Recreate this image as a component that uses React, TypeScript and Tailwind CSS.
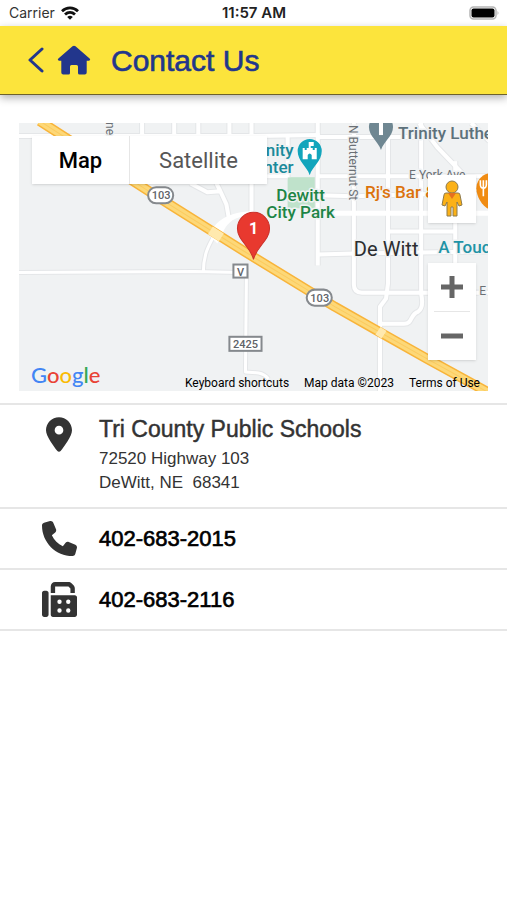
import { FaFax, FaLocationDot, FaPhone } from "react-icons/fa6";

const streets = [
  "M0 13H92V0M124 0V13M92 13H235M156 0V13M180 0V13M211 0V13M235 13L301 12",
  "M233 0V95M299 0V142M335 0V161Q335 169 343 169H408",
  "M369 0V160L367 175L361 183V267",
  "M402 0V170Q405 184 399 188C391 190 394 200 385 200H362",
  "M436 38V140",
  "M299 14H402M299 53H470M299 72L335 73L436 70M369 108H436M299 131L335 130L470 128",
  "M408 169H470M400 0L418 24L462 70M452 0L470 18M269 14V54M233 53H269",
  "M172 60L189 69L202 68L208 81L211 98M202 68L198 60",
];

const ruralRoads = [
  "M0 149L176 148L222 149",
  "M228 148L227 248L240 249Q246 250 250 255",
  "M196 112C190 122 185 132 185 149",
];

const highway =
  "M22 -2L151 81L226 128L316 183L362 209L408 235L470 269";

function Roads({ paths, width, casing }: { paths: string[]; width: number; casing: number }) {
  return (
    <g fill="none" strokeLinejoin="round">
      {paths.map((d) => (
        <path key={`${d}-casing`} d={d} stroke="#e4e6e8" strokeWidth={casing} />
      ))}
      {paths.map((d) => (
        <path key={d} d={d} stroke="#ffffff" strokeWidth={width} />
      ))}
    </g>
  );
}

function MapCanvas() {
  return (
    <svg
      viewBox="0 0 470 267"
      preserveAspectRatio="xMidYMid slice"
      className="h-full w-full font-[Roboto,sans-serif]"
      aria-hidden="true"
    >
      <rect width="470" height="267" fill="#f0f2f3" />
      <rect x="269" y="54" width="29" height="31" fill="#bfe2cb" />
      <Roads paths={ruralRoads} width={3} casing={5} />
      <Roads paths={streets} width={4} casing={6} />
      <path d="M297 90H470" stroke="#ffffff" strokeWidth="5" />
      <path
        d="M191 112C196 98 210 88 236 88V92C218 92 210 98 205 108L199 120Z"
        fill="#ffffff"
      />

      <g fill="none" strokeLinejoin="round">
        <path d={highway} stroke="#f8b43a" strokeWidth="10" />
        <path d={highway} stroke="#fdd878" strokeWidth="7" />
        <path d={highway} stroke="#fbcb60" strokeWidth="1" />
        <path d="M192 107L203 114M359 207L365 211" stroke="#ffe9ae" strokeWidth="9" />
      </g>

      <g fill="#ffffff" stroke="#85898d" strokeWidth="2">
        <rect x="130" y="64" width="25" height="16" rx="8" />
        <rect x="288" y="166" width="25" height="16" rx="8" />
        <rect x="215" y="141" width="14" height="13" />
        <rect x="211" y="213" width="32" height="14" />
      </g>
      <g fill="#5f6368" fontSize="11" fontWeight="500" textAnchor="middle">
        <text x="143" y="76">103</text>
        <text x="301" y="178">103</text>
        <text x="222" y="152">V</text>
        <text x="227" y="224">2425</text>
      </g>

      <g stroke="#f0f2f3" strokeWidth="3" paintOrder="stroke" strokeLinejoin="round">
        <g fill="#6b7075" fontSize="12">
          <text transform="translate(88 -1) rotate(90)">ne</text>
          <text transform="translate(330 2) rotate(90)">N Butternut St</text>
          <text x="390" y="56">E York Ave</text>
          <text x="460" y="171">E</text>
        </g>
        <g fontSize="17" fontWeight="500">
          <text x="275" y="33" fill="#1a8a9b" textAnchor="end">nity</text>
          <text x="275" y="50" fill="#1a8a9b" textAnchor="end">nter</text>
          <text x="282" y="78" fill="#1e8546" textAnchor="middle">Dewitt</text>
          <text x="282" y="95" fill="#1e8546" textAnchor="middle">City Park</text>
          <text x="379" y="16" fill="#5d717b">Trinity Luthe</text>
          <text x="346" y="75" fill="#dc720b">Rj's Bar &amp;</text>
          <text x="419" y="130" fill="#1f93a6">A Touc</text>
        </g>
        <text x="335" y="133" fill="#2b2d30" fontSize="20">De Witt</text>
      </g>

      <g>
        <path d="M291 52C288 43 279 38 279 28A12 12 0 0 1 303 28C303 38 294 43 291 52Z" fill="#12a5bc" />
        <path
          d="M284 36V25H286V27H288V25H290V19H295V23H292V25H294V27H296V25H298V36H293V32Q291 29 289 32V36Z"
          fill="#ffffff"
        />
        <path d="M362 27C359 18 350 13 350 4A12 12 0 0 1 374 4C374 13 365 18 362 27Z" fill="#6f8792" />
        <path d="M360 0H364V12H360Z" fill="#ffffff" />
        <path d="M470 86C464 84 457 74 457 65C457 58 462 51 470 50Z" fill="#f08c13" />
        <path d="M461 57V61Q461 65 464 65Q467 65 467 61V57M464 57V73" fill="none" stroke="#ffffff" strokeWidth="1.6" />
        <path d="M470 57V73" stroke="#ffffff" strokeWidth="2" />
      </g>

      <path
        d="M235 136C232 123 219 117 219 105A16 16 0 0 1 251 105C251 117 238 123 235 136Z"
        fill="#e8392f"
        stroke="#c9302a"
      />
      <text x="235" y="111" fill="#ffffff" fontSize="16" fontWeight="700" textAnchor="middle">
        1
      </text>
    </svg>
  );
}

function Pegman() {
  return (
    <svg viewBox="0 0 24 40" className="h-10 w-6" aria-hidden="true">
      <g fill="#fbb117" stroke="#8d7a4c" strokeWidth="1">
        <path d="M6 14H18Q20 14 20 16L22 26L19 27L17 23V37H13V28H11V37H7V23L5 27L2 26L4 16Q4 14 6 14Z" />
        <circle cx="12" cy="8" r="6" />
      </g>
      <path d="M8 14H16L12 20Z" fill="#e5701f" />
    </svg>
  );
}

function HomeIcon() {
  return (
    <svg viewBox="0 0 34 30" className="h-[30px] w-[34px]" aria-hidden="true">
      <path
        d="M15.500 1.300Q17 0 18.500 1.300L32.600 13.600Q34 15.200 32 15.800H29.700V27.500Q29.700 29.500 27.700 29.500H22.500Q21 29.500 21 28V21.500Q21 20 19.500 20H14.500Q13 20 13 21.500V28Q13 29.500 11.500 29.500H6.300Q4.300 29.500 4.300 27.500V15.800H2Q0 15.200 1.400 13.600Z"
        fill="currentColor"
      />
    </svg>
  );
}

function StatusBar() {
  return (
    <div className="grid h-[26px] grid-cols-3 items-center pr-2 pl-[9px] font-[Inter,sans-serif] text-[#333]">
      <div className="flex items-center gap-1.5">
        <span className="text-sm">Carrier</span>
        <svg viewBox="0 0 18 14" className="h-3.5 w-[18px]" aria-hidden="true">
          <g fill="none" stroke="#111" strokeWidth="2.8">
            <path d="M1 5.200C5.600 .8 12.400 .8 17 5.200" />
            <path d="M4 8.600C7 5.800 11 5.800 14 8.600" />
          </g>
          <path d="M6.200 10.900Q9 8.800 11.800 10.900L9 13.800Z" fill="#111" />
        </svg>
      </div>
      <span className="text-center text-[15px] font-semibold text-[#222]">11:57 AM</span>
      <svg viewBox="0 0 30 14" className="h-3.5 w-[30px] justify-self-end" aria-hidden="true">
        <rect x="1" y="1" width="26" height="12" rx="3.500" fill="#fff" stroke="#b5b5b5" strokeWidth="1.500" />
        <rect x="2.500" y="2.500" width="23" height="9" rx="2" fill="#000" />
        <path d="M28.500 5Q30.500 7 28.500 9Z" fill="#b5b5b5" />
      </svg>
    </div>
  );
}

function ContactMap() {
  return (
    <section className="relative mx-[19px] mt-7 h-[268px] overflow-hidden font-[Roboto,sans-serif]">
      <MapCanvas />
      <div className="absolute top-[13px] left-[13px] flex h-12 divide-x divide-[#e6e6e6] bg-white text-[22px] shadow">
        <button type="button" className="w-[98px] font-medium text-black">
          Map
        </button>
        <button type="button" className="w-[137px] text-[#565656]">
          Satellite
        </button>
      </div>
      <button
        type="button"
        aria-label="Street View"
        className="absolute top-[52px] right-3 flex size-12 items-center justify-center bg-white shadow"
      >
        <Pegman />
      </button>
      <div className="absolute top-[140px] right-3 flex w-12 flex-col items-center bg-white shadow">
        <button type="button" aria-label="Zoom in" className="flex size-12 items-center justify-center">
          <svg viewBox="0 0 22 22" className="size-[22px]" aria-hidden="true">
            <path d="M11 0V22M0 11H22" stroke="#666" strokeWidth="5" />
          </svg>
        </button>
        <div className="h-px w-9 bg-[#e6e6e6]" />
        <button type="button" aria-label="Zoom out" className="flex size-12 items-center justify-center">
          <svg viewBox="0 0 22 22" className="size-[22px]" aria-hidden="true">
            <path d="M0 11H22" stroke="#666" strokeWidth="5" />
          </svg>
        </button>
      </div>
      <div className="absolute bottom-0 left-3 font-[Lato,sans-serif] text-[22px] leading-8 font-medium">
        <span className="text-[#4285f4]">G</span>
        <span className="text-[#e94235]">o</span>
        <span className="text-[#fabb05]">o</span>
        <span className="text-[#4285f4]">g</span>
        <span className="text-[#34a853]">l</span>
        <span className="text-[#e94235]">e</span>
      </div>
      <div className="absolute right-2 bottom-0 flex gap-[15px] text-xs text-black">
        <button type="button">Keyboard shortcuts</button>
        <span>Map data ©2023</span>
        <a href="#terms">Terms of Use</a>
      </div>
    </section>
  );
}

const phones = [
  { number: "402-683-2015", icon: FaPhone },
  { number: "402-683-2116", icon: FaFax },
];

export default function App() {
  return (
    <div className="min-h-screen bg-white font-['Liberation_Sans',Arial,sans-serif]">
      <StatusBar />
      <header className="flex h-[69px] items-center border-b border-[#6d622c] bg-[#fce43c] pl-7 text-[#22368c] shadow-[0_3px_8px_rgba(0,0,0,0.3)]">
        <a href="#back" aria-label="Back">
          <svg viewBox="0 0 16 26" className="h-[26px] w-4" aria-hidden="true">
            <path d="M14 2L2 13L14 24" fill="none" stroke="currentColor" strokeWidth="3" strokeLinecap="round" strokeLinejoin="round" />
          </svg>
        </a>
        <a href="#home" aria-label="Home" className="ml-[13px]">
          <HomeIcon />
        </a>
        <h1 className="ml-5 text-[30px] [-webkit-text-stroke:0.02em]">Contact Us</h1>
      </header>

      <main>
        <ContactMap />
        <ul className="mt-3 divide-y-2 divide-[#e6e6e6] border-y-2 border-[#e6e6e6]">
          <li className="flex h-[104px] pt-2.5 text-[#333]">
            <div className="flex w-[99px] justify-center pt-0.5 pl-[19px]">
              <FaLocationDot className="h-[35px] w-[26px]" />
            </div>
            <div>
              <h2 className="text-[23px] leading-7 [-webkit-text-stroke:0.02em]">
                Tri County Public Schools
              </h2>
              <p className="mt-1 text-[17px] leading-6 whitespace-pre-line">
                72520 Highway 103{"\n"}DeWitt, NE&nbsp; 68341
              </p>
            </div>
          </li>
          {phones.map(({ number, icon: Icon }) => (
            <li key={number}>
              <a href={`tel:${number}`} className="flex h-[59px] items-center text-black">
                <span className="flex w-[99px] justify-center pl-[19px]">
                  <Icon className="size-[35px] text-[#333]" />
                </span>
                <span className="text-[22px] [-webkit-text-stroke:0.03em]">{number}</span>
              </a>
            </li>
          ))}
        </ul>
      </main>
    </div>
  );
}
